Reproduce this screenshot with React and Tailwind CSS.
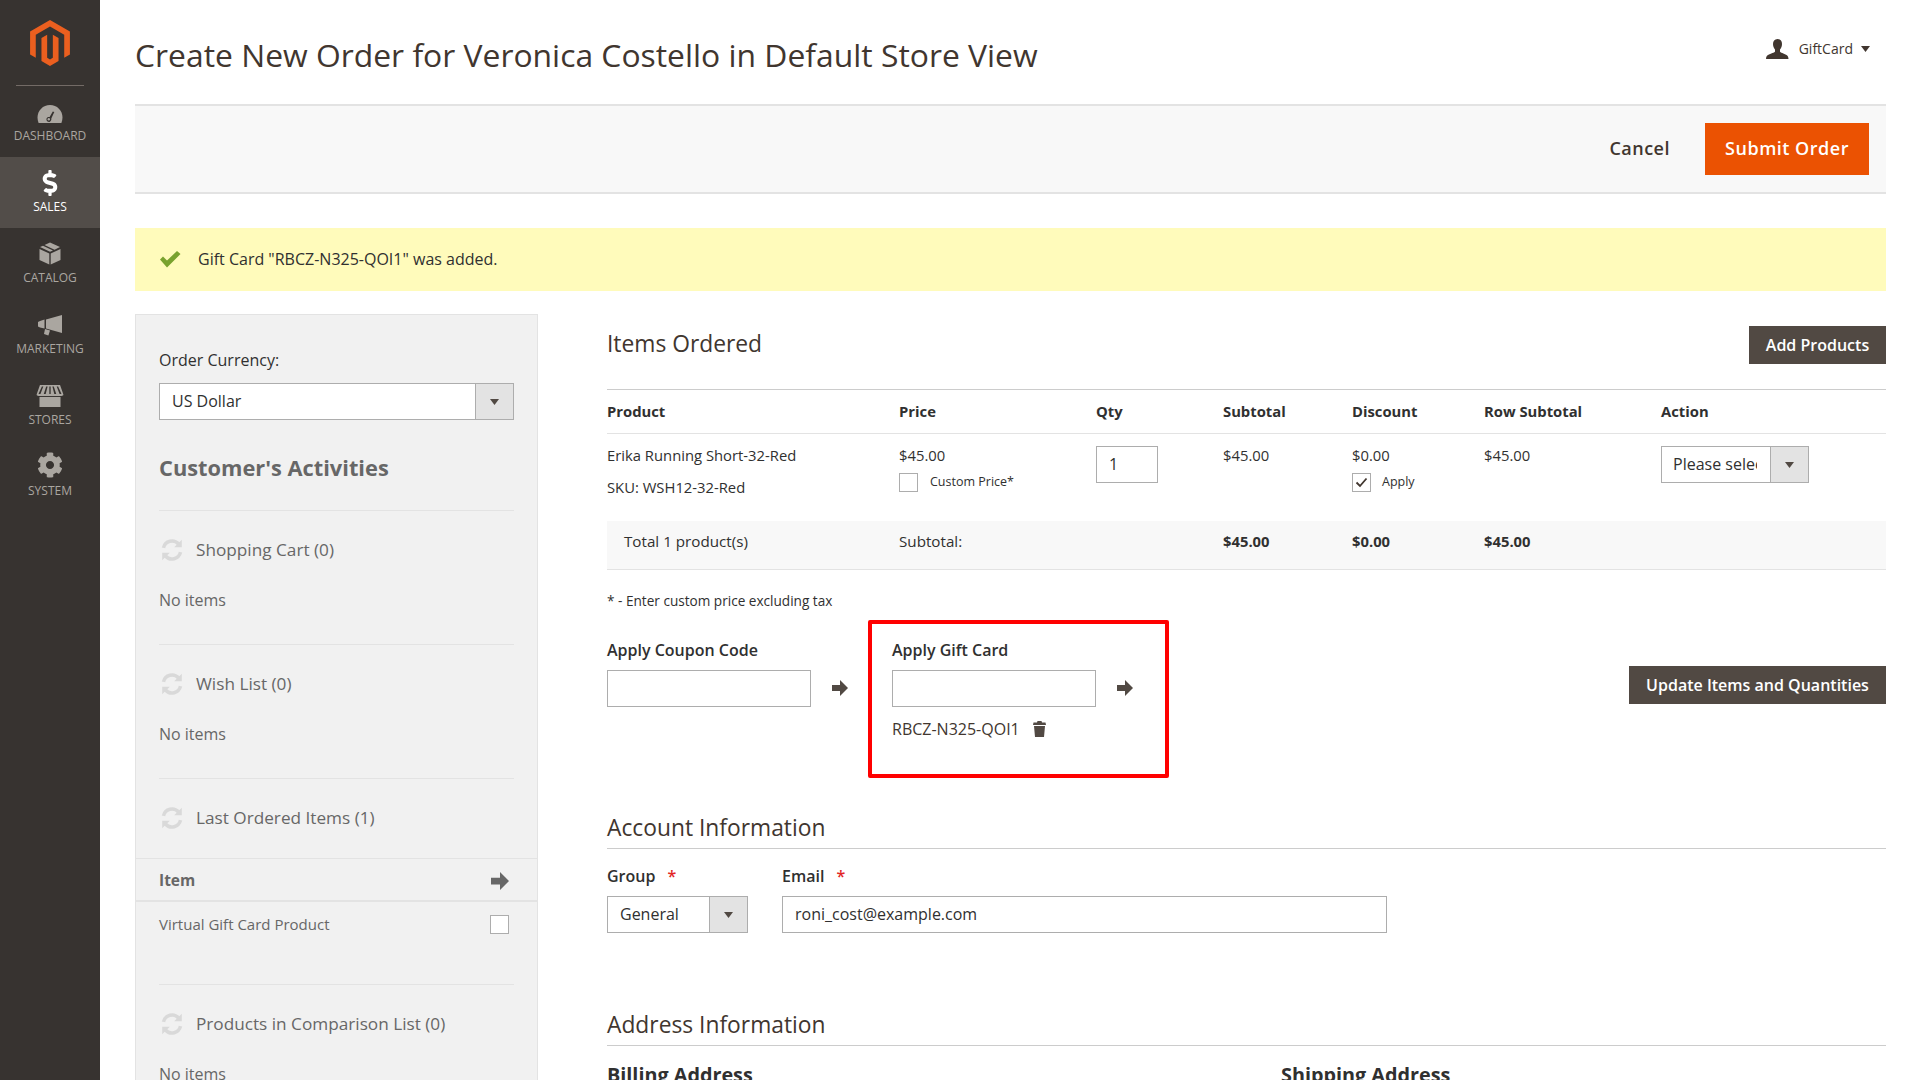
import React from "react";
import { SiMagento } from "react-icons/si";
import { FaCog, FaDollarSign } from "react-icons/fa";

const Gauge = () => (
  <svg width="26" height="18" viewBox="0 1 26 18" className="fill-current">
    <path fillRule="evenodd" d="M13 1C6 1 .5 6.500.5 13.500c0 2 .4 3.800 1.100 5.500h22.800c.7-1.700 1.100-3.500 1.100-5.500C25.500 6.500 20 1 13 1zM15.800 7.500l1.500.6-3 6.500c.3 1.300-.2 2.600-1.400 3.100-1.300.5-2.800-.1-3.300-1.400-.5-1.300.2-2.700 1.500-3.200.5-.2 1-.2 1.500-.1l3.200-5.500z" />
    <circle cx="11.800" cy="15.300" r="1.200" />
  </svg>
);
const Box = () => (
  <svg width="22" height="23" viewBox="0 0 22 25" preserveAspectRatio="none" className="fill-current">
    <path d="M.5 7.500l9.800 5v12l-9.800-5zM21.500 7.500l-9.800 5v12l9.800-5zM5.500 3.300L11 .5l10 5-5.500 2.800zM4 4l10 5.200-3 1.500L1 5.500z" />
  </svg>
);
const Horn = () => (
  <svg width="26" height="21" viewBox="0 0 26 21" className="fill-current">
    <path d="M25 0v18l-16-4.500v-9zM7.500 4.500v9L3 12.500l-2-1V7l2-1z" />
    <path d="M8 14l5 1.500-1.600 5-4.400-1.500z" />
  </svg>
);
const Store = () => (
  <svg width="28" height="22" viewBox="0 0 28 23" className="fill-current">
    <path fillRule="evenodd" d="M3.500 0h21L28 10c0 1-1 1.500-2 1.500H2c-1 0-2-.5-2-1.500zM5.500 1.500L2 9.500h2L7 1.500zM10 1.500L7.500 9.500h2L11.500 1.500zM13.300 1.500v8h1.400v-8zM16.500 1.500l2 8h2L18 1.500zM21 1.500l3 8h2L22.500 1.500z" />
    <path d="M3 12.500h22V23H3z" />
  </svg>
);
const Arrow = ({ className, size = 16 }) => (
  <svg width={size} height={size} viewBox="0 0 16 16" className={className}>
    <path d="M0 5h8V0l8 8-8 8v-5H0z" fill="currentColor" />
  </svg>
);
const Caret = ({ className = "" }) => (
  <svg width="9" height="6" viewBox="0 0 9 6" className={className}>
    <path d="M0 0h9L4.500 6z" fill="currentColor" />
  </svg>
);
const Spin = () => (
  <svg width="24" height="24" viewBox="0 0 22 22" className="shrink-0 ml-[1px] text-[#d9d9d9]">
    <path d="M3.200 9A8 8 0 0 1 17 5.500" fill="none" stroke="currentColor" strokeWidth="3.200" />
    <path d="M20 1.500v7h-7z" fill="currentColor" />
    <path d="M18.800 13A8 8 0 0 1 5 16.500" fill="none" stroke="currentColor" strokeWidth="3.200" />
    <path d="M2 20.500v-7h7z" fill="currentColor" />
  </svg>
);
const Trash = () => (
  <svg width="13" height="16" viewBox="0 0 13 16" className="text-[#514943]">
    <path d="M4.500 0h4l.5 1.500h3.500L13 4H0l.5-2.500H4zM1 5h11l-1 11H2z" fill="currentColor" />
  </svg>
);

const NavItem = ({ label, icon, active }) => (
  <div className={`h-[71px] flex flex-col items-center ${active ? "bg-[#524d49] text-white" : "text-[#aaa6a0]"}`}>
    <div className="h-[37px] flex items-end justify-center">{icon}</div>
    <div className="text-[12px] leading-[18px] mt-[4px] uppercase">{label}</div>
  </div>
);

const Sidebar = () => (
  <aside className="w-[100px] shrink-0 bg-[#373330] h-full">
    <div className="h-[86px] mx-[16px] border-b border-[#736b66] flex items-start justify-center pt-[20px]">
      <SiMagento className="text-[#eb5f1f]" size={46} />
    </div>
    <NavItem label="Dashboard" icon={<Gauge />} />
    <NavItem label="Sales" active icon={<FaDollarSign size={26} className="-mb-[2px]" />} />
    <NavItem label="Catalog" icon={<Box />} />
    <NavItem label="Marketing" icon={<Horn />} />
    <NavItem label="Stores" icon={<Store />} />
    <NavItem label="System" icon={<FaCog size={26} />} />
  </aside>
);

const Select = ({ text, className, inner = "pl-[12px] pr-[13px]" }) => (
  <div className={`flex h-[37px] bg-white border border-[#adadad] ${className}`}>
    <div className={`flex-1 min-w-0 ${inner}`}>
      <div className="overflow-hidden whitespace-nowrap text-[16px] leading-[35px] text-[#303030]">{text}</div>
    </div>
    <div className="w-[38px] shrink-0 bg-[#e3e3e3] border-l border-[#adadad] flex items-center justify-center text-[#514943]">
      <Caret />
    </div>
  </div>
);

const ActivityHead = ({ label }) => (
  <div className="flex items-center gap-[12px] pt-[27px] h-[51px] text-[17.2px] text-[#676767]">
    <Spin />
    <span>{label}</span>
  </div>
);

const Activity = ({ label, children, h }) => (
  <div className={`mx-[23px] border-t border-[#e3e3e3] ${h}`}>
    <ActivityHead label={label} />
    {children}
  </div>
);

const NoItems = () => <div className="mt-[27px] text-[16px] leading-[22px] text-[#676767]">No items</div>;

const LeftPanel = () => (
  <div className="w-[403px] shrink-0 h-[800px] bg-[#f1f1f1] border border-[#e3e3e3] overflow-hidden">
    <div className="mx-[23px] mt-[34px] text-[16px] leading-[22px] text-[#303030]">Order Currency:</div>
    <Select text="US Dollar" className="mx-[23px] mt-[12px]" />
    <div className="mx-[23px] mt-[32px] h-[32px] text-[21.8px] leading-[32px] font-bold text-[#676767]">Customer's Activities</div>
    <div className="mt-[26px]">
      <Activity label="Shopping Cart (0)" h="h-[134px]"><NoItems /></Activity>
      <Activity label="Wish List (0)" h="h-[134px]"><NoItems /></Activity>
      <div className="mx-[23px] border-t border-[#e3e3e3] h-[80px]">
        <ActivityHead label="Last Ordered Items (1)" />
      </div>
      <div className="h-[44px] pt-[2px] border-t border-b-2 border-[#e3e3e3] flex items-center justify-between pl-[23px] pr-[28px] text-[15.5px] font-bold text-[#676767]">
        <span>Item</span>
        <Arrow size={18} />
      </div>
      <div className="h-[82px] flex items-start justify-between pl-[23px] pr-[28px] pt-[12px] text-[15px] leading-[20px] text-[#676767]">
        <span>Virtual Gift Card Product</span>
        <span className="w-[19px] h-[19px] mt-[1px] bg-white border border-[#adadad]" />
      </div>
      <Activity label="Products in Comparison List (0)" h="h-[120px]"><NoItems /></Activity>
    </div>
  </div>
);

const GRID = "grid grid-cols-[292px_197px_127px_129px_132px_177px_1fr]";

const Check = ({ checked }) => (
  <span className="w-[19px] h-[19px] bg-white border border-[#adadad] flex items-center justify-center shrink-0 text-[#41362f]">
    {checked && (
      <svg width="13" height="11" viewBox="0 0 13 11">
        <path d="M1.500 5.500l3.500 3.500 6.500-7.500" fill="none" stroke="currentColor" strokeWidth="1.800" />
      </svg>
    )}
  </span>
);

const ItemsTable = () => (
  <div className="mt-[20px] border-t border-[#cccccc] text-[14.8px] text-[#303030]">
    <div className={`${GRID} h-[44px] pb-[2px] border-b border-[#e3e3e3] items-center font-bold leading-[20px]`}>
      <span>Product</span><span>Price</span><span>Qty</span><span>Subtotal</span><span>Discount</span><span>Row Subtotal</span><span>Action</span>
    </div>
    <div className={`${GRID} h-[87px] pt-[11px] leading-[20px]`}>
      <div>
        <div>Erika Running Short-32-Red</div>
        <div className="mt-[12px]">SKU: WSH12-32-Red</div>
      </div>
      <div>
        <div>$45.00</div>
        <div className="flex items-center gap-[12px] mt-[7px] text-[12.5px]"><Check /><span>Custom Price*</span></div>
      </div>
      <div><div className="w-[62px] h-[37px] mt-[1px] border border-[#adadad] pl-[12px] text-[16px] leading-[35px]">1</div></div>
      <div>$45.00</div>
      <div>
        <div>$0.00</div>
        <div className="flex items-center gap-[11px] mt-[7px] text-[12.5px]"><Check checked /><span>Apply</span></div>
      </div>
      <div>$45.00</div>
      <div><Select text="Please select" className="w-[148px] mt-[1px]" inner="pl-[11px] pr-[13px]" /></div>
    </div>
    <div className={`${GRID} h-[49px] pb-[7px] bg-[#f8f8f8] border-b border-[#e3e3e3] items-center`}>
      <span className="pl-[17px] text-[15.2px] font-medium">Total 1 product(s)</span>
      <span className="text-[15.2px] font-medium">Subtotal:</span>
      <span />
      <span className="font-bold">$45.00</span>
      <span className="font-bold">$0.00</span>
      <span className="font-bold">$45.00</span>
      <span />
    </div>
  </div>
);

const Coupon = () => (
  <div className="flex mt-[38px] h-[158px]">
    <div className="w-[261px] pt-[19px]">
      <div className="text-[16px] leading-[22px] font-semibold text-[#303030]">Apply Coupon Code</div>
      <div className="flex items-center mt-[9px]">
        <div className="w-[204px] h-[37px] border border-[#adadad]" />
        <Arrow className="ml-[21px] -mt-[2px] text-[#514943]" />
      </div>
    </div>
    <div className="w-[301px] border-[4px] border-[#ff0000] rounded-[2px] pl-[20px] pt-[15px]">
      <div className="text-[16px] leading-[22px] font-semibold text-[#303030]">Apply Gift Card</div>
      <div className="flex items-center mt-[9px]">
        <div className="w-[204px] h-[37px] border border-[#adadad]" />
        <Arrow className="ml-[21px] -mt-[2px] text-[#514943]" />
      </div>
      <div className="flex items-center gap-[13px] mt-[11px] text-[16px] leading-[22px] text-[#41362f]">
        <span>RBCZ-N325-QOI1</span>
        <Trash />
      </div>
    </div>
    <div className="flex-1 flex justify-end items-start pt-[46px]">
      <button className="h-[38px] w-[257px] bg-[#514943] text-white text-[16px] font-semibold">Update Items and Quantities</button>
    </div>
  </div>
);

const Required = ({ children }) => (
  <div className="text-[16px] leading-[22px] font-semibold text-[#303030]">
    {children}<span className="ml-[12px] text-[#e22626]">*</span>
  </div>
);

const RightCol = () => (
  <div className="flex-1 min-w-0 ml-[69px]">
    <div className="flex items-center justify-between h-[55px] pt-[6px]">
      <h2 className="text-[22.8px] text-[#41362f]">Items Ordered</h2>
      <button className="w-[137px] h-[38px] bg-[#514943] text-white text-[16px] font-semibold">Add Products</button>
    </div>
    <ItemsTable />
    <div className="mt-[22px] text-[13.6px] leading-[18px] text-[#303030]">* - Enter custom price excluding tax</div>
    <div className="-mt-[28px]"><Coupon /></div>
    <h2 className="mt-[35px] h-[36px] border-b border-[#cccccc] text-[22.8px] leading-[30px] text-[#41362f]">Account Information</h2>
    <div className="flex mt-[16px]">
      <div className="w-[175px]">
        <Required>Group</Required>
        <Select text="General" className="w-[141px] mt-[9px]" />
      </div>
      <div>
        <Required>Email</Required>
        <div className="w-[605px] h-[37px] mt-[9px] border border-[#adadad] pl-[12px] text-[16px] leading-[35px] text-[#303030]">roni_cost@example.com</div>
      </div>
    </div>
    <h2 className="mt-[77px] h-[36px] border-b border-[#cccccc] text-[22.8px] leading-[30px] text-[#41362f]">Address Information</h2>
    <div className="flex mt-[16px] text-[19.8px] leading-[26px] font-bold text-[#303030]">
      <div className="w-[674px]">Billing Address</div>
      <div>Shipping Address</div>
    </div>
  </div>
);

export default function App() {
  return (
    <div className="flex w-[1920px] h-[1080px] overflow-hidden bg-white" style={{ fontFamily: '"Open Sans", sans-serif' }}>
      <Sidebar />
      <main className="flex-1 min-w-0 pl-[35px] pr-[34px]">
        <header className="h-[104px] flex items-start justify-between">
          <h1 className="mt-[33px] text-[31.85px] leading-[44px] text-[#41362f]">Create New Order for Veronica Costello in Default Store View</h1>
          <div className="mt-[38px] mr-[16px] flex items-center text-[14px] text-[#41362f]">
            <svg width="23" height="20" viewBox="0 0 23 20" className="mr-[10px] fill-current">
              <path d="M11.500 0c3 0 4.500 2.200 4.500 5 0 2.500-1 4.500-2 5.500v2c0 1 4 2 6.500 3.500 1 .6 1.800 1.400 2 4H0c.2-2.600 1-3.400 2-4C4.500 14.500 9 13.500 9 12.500v-2C8 9.500 7 7.500 7 5c0-2.800 1.500-5 4.500-5z" />
            </svg>
            <span>GiftCard</span>
            <Caret className="ml-[8px]" />
          </div>
        </header>
        <div className="h-[90px] bg-[#f8f8f8] border-y-2 border-[#e3e3e3] flex items-center justify-end pr-[17px]">
          <span className="text-[18px] font-semibold text-[#41362f] tracking-[0.5px] pb-[2px]">Cancel</span>
          <button className="ml-[35px] w-[164px] h-[52px] pb-[2px] bg-[#eb5202] text-white text-[18px] font-semibold tracking-[0.5px]">Submit Order</button>
        </div>
        <div className="mt-[34px] h-[63px] pb-[2px] bg-[#fffbbb] flex items-center pl-[24px] text-[16px] text-[#303030]">
          <svg width="22" height="18" viewBox="0 0 22 18" className="mr-[17px]">
            <path d="M1 9.500l3-3 4 4L18 1l3.500 3L8 17.500z" fill="#79a22e" />
          </svg>
          <span>Gift Card "RBCZ-N325-QOI1" was added.</span>
        </div>
        <div className="flex mt-[23px]">
          <LeftPanel />
          <RightCol />
        </div>
      </main>
    </div>
  );
}
